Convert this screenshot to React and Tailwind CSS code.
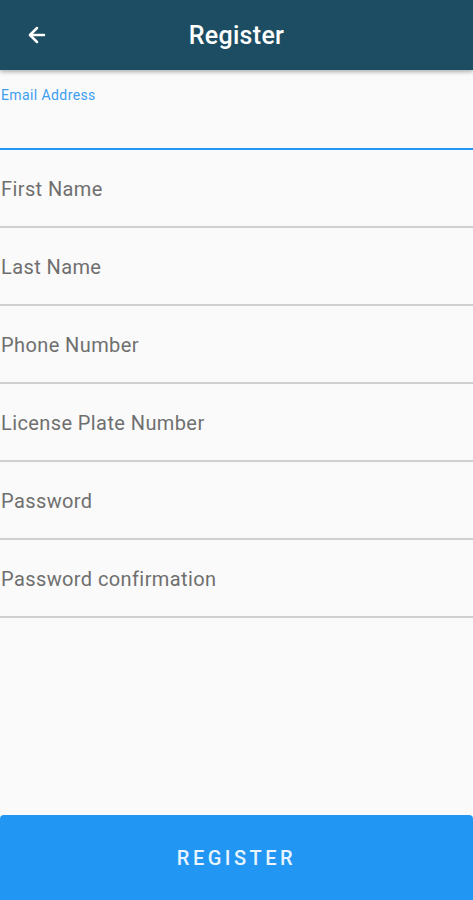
import { ArrowLeft } from 'lucide-react'

const fields = [
  'First Name',
  'Last Name',
  'Phone Number',
  'License Plate Number',
  'Password',
  'Password confirmation',
]

export default function App() {
  return (
    <div
      className="h-[900px] w-[473px] bg-[#fafafa] flex flex-col overflow-hidden"
      style={{ fontFamily: 'Roboto, "Noto Sans", sans-serif' }}
    >
      {/* App bar */}
      <header className="relative z-10 h-[70px] shrink-0 bg-[#1c4d62] flex items-center shadow-[0_2px_4px_rgba(0,0,0,0.3)]">
        <div className="w-[74px] flex justify-center">
          <ArrowLeft className="w-6 h-6 text-white" strokeWidth={2.5} />
        </div>
        <h1 className="flex-1 text-center pr-[74px] pt-[2px] text-white text-[25px] font-medium tracking-[0.3px]">Register</h1>
      </header>

      {/* Form */}
      <main className="flex-1 flex flex-col">
        <div className="h-[80px] border-b-2 border-[#2196f3] pt-[13px]">
          <span className="text-[14px] text-[#3d9ef0] pl-px tracking-[0.4px]">Email Address</span>
        </div>
        {fields.map((f) => (
          <div key={f} className="h-[78px] border-b-2 border-[#cfcfcf] flex items-center pt-[1px]">
            <span className="text-[20px] text-[#6f6f6f] pl-px tracking-[0.4px]">{f}</span>
          </div>
        ))}
      </main>

      {/* Submit */}
      <button className="h-[85px] shrink-0 bg-[#2196f3] text-[#e8f4fe] text-[20px] font-medium tracking-[3.5px] rounded-t-[4px]">
        REGISTER
      </button>
    </div>
  )
}
